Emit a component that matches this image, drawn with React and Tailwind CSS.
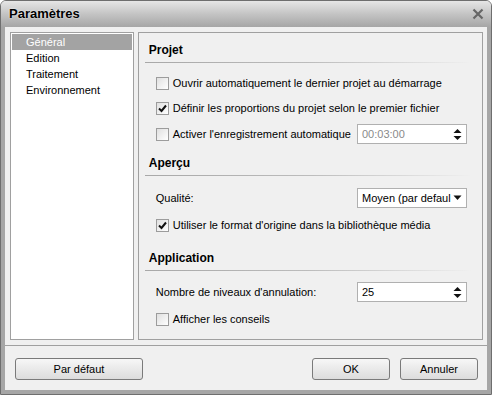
import React from 'react'

const font = { fontFamily: '"Liberation Sans", Arial, sans-serif' }

function Check({ checked }) {
  return (
    <span className="w-[13px] h-[13px] shrink-0 border border-[#9c9c9c] bg-gradient-to-br from-[#e0e0e0] to-white flex items-center justify-center">
      {checked && (
        <svg width="9" height="9" viewBox="0 0 9 9">
          <path d="M1 4.5 L3.5 7 L8 1.5" fill="none" stroke="#111" strokeWidth="2" />
        </svg>
      )}
    </span>
  )
}

function CheckRow({ checked, label, className = '' }) {
  return (
    <div className={`flex items-center gap-[4px] pl-[17px] ${className}`}>
      <Check checked={checked} />
      <span className="text-[11px] text-black leading-none">{label}</span>
    </div>
  )
}

function Spin({ value, dim }) {
  return (
    <div className="w-[110px] h-[20px] border border-[#b0b0b0] bg-white flex items-center pl-[4px] pr-[4px]">
      <span className={`flex-1 text-[11px] ${dim ? 'text-[#8a8a8a]' : 'text-black'}`}>{value}</span>
      <svg width="9" height="14" viewBox="0 0 9 14">
        <path d="M0.5 6 L4.5 2 L8.5 6 Z" fill="#111" />
        <path d="M0.5 9 L4.5 13 L8.5 9 Z" fill="#111" />
      </svg>
    </div>
  )
}

function Heading({ children, className = '' }) {
  return (
    <div className={className}>
      <div className="flex items-end pl-[10px] h-full pb-[6px]">
        <span className="text-[12px] font-bold text-black leading-none">{children}</span>
      </div>
    </div>
  )
}

function Line() {
  return <div className="ml-[6px] mr-[10px] h-px bg-gradient-to-r from-[#a8a8a8] via-[#bcbcbc] to-[#f0f0f0]" />
}

function Button({ children, className = '' }) {
  return (
    <div className={`h-[22px] rounded-[3px] border border-[#7a7a7a] bg-gradient-to-b from-[#f7f7f7] to-[#dcdcdc] flex items-center justify-center text-[11px] text-black ${className}`}>
      {children}
    </div>
  )
}

export default function App() {
  const items = ['Général', 'Edition', 'Traitement', 'Environnement']
  return (
    <div className="w-[492px] h-[395px] flex flex-col bg-[#f0f0f0] rounded-t-[6px] overflow-hidden border border-[#6e6e6e]" style={font}>
      <div className="h-[26px] shrink-0 flex items-center justify-between pl-[8px] pr-[7px] bg-gradient-to-b from-[#e6e6e6] via-[#c4c4c4] to-[#a6a6a6]">
        <span className="text-[13px] font-bold text-black [text-shadow:0_0_2px_#fff]">Paramètres</span>
        <svg width="12" height="12" viewBox="0 0 12 12">
          <path d="M1.5 1.5 L10.5 10.5 M10.5 1.5 L1.5 10.5" stroke="#666" strokeWidth="2.2" />
        </svg>
      </div>
      <div className="flex-1 flex flex-col border-x-[4px] border-b-[4px] border-[#a6a6a6]">
        <div className="flex gap-[4px] pt-[5px] pl-[5px] pr-[4px] h-[313px]">
          <div className="w-[124px] h-[308px] border border-[#a0a0a0] bg-white pt-px px-px">
            {items.map((t, i) => (
              <div key={t} className={`h-[16px] flex items-center pl-[14px] text-[11px] ${i === 0 ? 'bg-[#a3a3a3] text-white' : 'text-black'}`}>
                {t}
              </div>
            ))}
          </div>
          <div className="w-[346px] h-[308px] border border-[#a0a0a0] bg-[#f0f0f0]">
            <Heading className="h-[29px]">Projet</Heading>
            <Line />
            <CheckRow className="h-[20px] mt-[10px]" label="Ouvrir automatiquement le dernier projet au démarrage" />
            <CheckRow className="h-[20px] mt-[5px]" checked label="Définir les proportions du projet selon le premier fichier" />
            <div className="flex items-center justify-between h-[20px] mt-[6px] pr-[15px]">
              <CheckRow label="Activer l'enregistrement automatique" />
              <Spin value="00:03:00" dim />
            </div>
            <Heading className="h-[31px]">Aperçu</Heading>
            <Line />
            <div className="flex items-center justify-between h-[20px] mt-[12px] pl-[17px] pr-[15px]">
              <span className="text-[11px]">Qualité:</span>
              <div className="w-[110px] h-[20px] border border-[#b0b0b0] bg-white flex items-center pl-[4px] pr-[4px] overflow-hidden">
                <span className="flex-1 text-[11px] whitespace-nowrap overflow-hidden">Moyen (par defaul</span>
                <svg width="9" height="6" viewBox="0 0 9 6" className="shrink-0 ml-[2px]">
                  <path d="M0.5 0.5 L4.5 5 L8.5 0.5 Z" fill="#111" />
                </svg>
              </div>
            </div>
            <CheckRow className="h-[20px] mt-[7px]" checked label="Utiliser le format d'origine dans la bibliothèque média" />
            <Heading className="h-[35px]">Application</Heading>
            <Line />
            <div className="flex items-center justify-between h-[20px] mt-[11px] pl-[17px] pr-[15px]">
              <span className="text-[11px]">Nombre de niveaux d'annulation:</span>
              <Spin value="25" />
            </div>
            <CheckRow className="h-[20px] mt-[7px]" label="Afficher les conseils" />
          </div>
        </div>
        <div className="h-px bg-[#a0a0a0] mt-[5px]" />
        <div className="flex items-center pl-[10px] pr-[9px] pt-[12px]">
          <Button className="w-[128px]">Par défaut</Button>
          <div className="flex-1" />
          <Button className="w-[78px]">OK</Button>
          <Button className="w-[78px] ml-[10px]">Annuler</Button>
        </div>
      </div>
    </div>
  )
}
